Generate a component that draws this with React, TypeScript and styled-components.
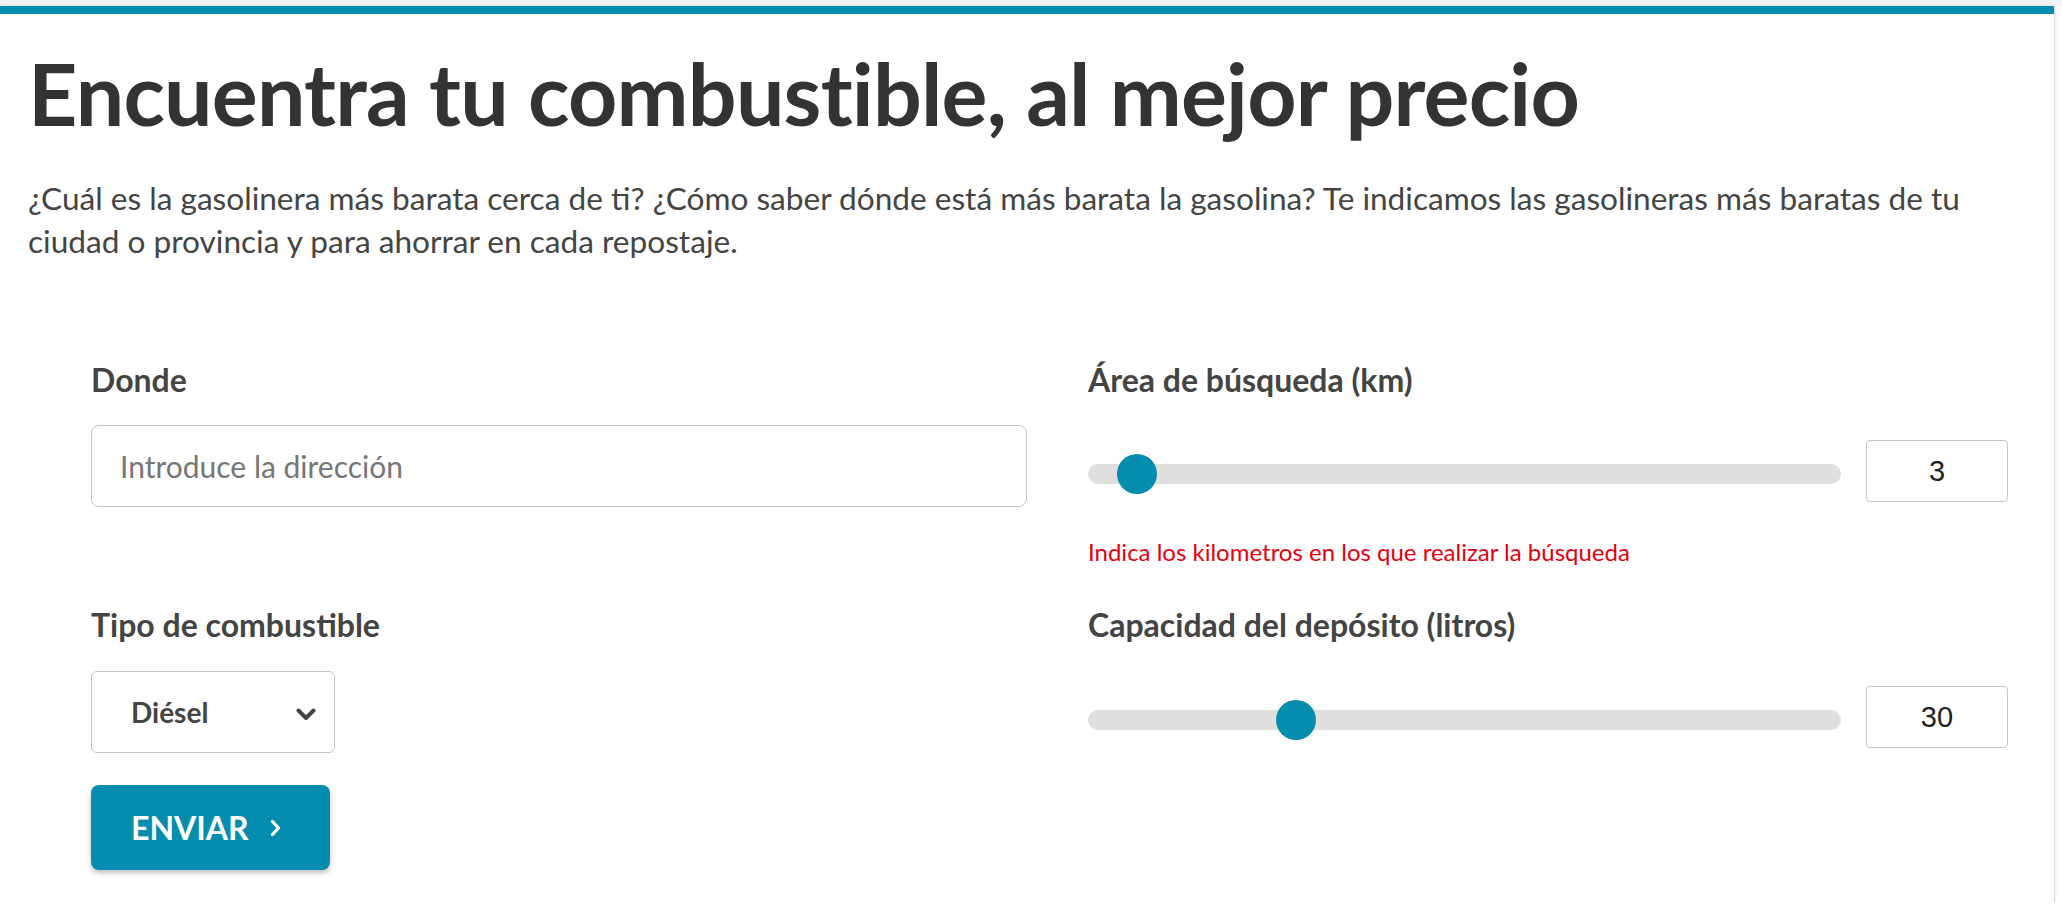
import React from "react";
import styled, { createGlobalStyle } from "styled-components";

const TEAL = "#058db0";

const GlobalStyle = createGlobalStyle`
  html, body { margin: 0; padding: 0; background: #ffffff; }
  body { font-family: Lato, "Noto Sans", sans-serif; }
  * { box-sizing: border-box; }
`;

const TopStrip = styled.div`
  height: 6px;
  background: #f3f3f3;
`;

const Card = styled.section`
  margin-right: 8px;
  background: #ffffff;
  border-top: 8px solid ${TEAL};
  box-shadow: 0 1px 3px rgba(0, 0, 0, 0.35);
  padding: 27px 28px 33px;
`;

const Title = styled.h1`
  margin: 0;
  font-family: Lato, sans-serif;
  font-weight: 700;
  font-size: 86px;
  line-height: 1.2;
  letter-spacing: -0.78px;
  color: #333333;
`;

const Intro = styled.p`
  margin: 33px 0 0;
  font-family: Lato, sans-serif;
  font-weight: 400;
  font-size: 31.6px;
  line-height: 43px;
  color: #444444;
`;

const Form = styled.form`
  margin-top: 98px;
  padding-left: 63px;
  display: grid;
  grid-template-columns: 936px 920px;
  column-gap: 61px;
  row-gap: 40px;
  align-items: start;
`;

const Field = styled.div`
  display: flex;
  flex-direction: column;
  align-items: stretch;
`;

const Label = styled.label`
  font-family: Lato, sans-serif;
  font-weight: 700;
  font-size: 32px;
  line-height: 38px;
  color: #444444;
`;

const TextInput = styled.input`
  margin-top: 26px;
  height: 82px;
  width: 100%;
  border: 1px solid #c5c5c5;
  border-radius: 8px;
  padding: 0 28px;
  font-family: Lato, sans-serif;
  font-size: 30px;
  color: #333;
  outline: none;
  &::placeholder { color: #767676; }
`;

const SliderRow = styled.div<{ $offset: number }>`
  margin-top: ${(p) => p.$offset}px;
  height: 62px;
  display: flex;
  align-items: center;
  gap: 25px;
`;

const Track = styled.div`
  position: relative;
  flex: 1;
  height: 20px;
  margin-top: 6px;
  border-radius: 10px;
  background: #e0dfdd;
`;

const Thumb = styled.span`
  position: absolute;
  top: 50%;
  width: 40px;
  height: 40px;
  margin-top: -20px;
  border-radius: 50%;
  background: ${TEAL};
`;

const NumberBox = styled.input`
  width: 142px;
  height: 62px;
  border: 1px solid #c6c6c6;
  border-radius: 4px;
  text-align: center;
  font-family: "Liberation Sans", Arial, sans-serif;
  font-size: 29px;
  color: #222222;
  outline: none;
  -moz-appearance: textfield;
  &::-webkit-outer-spin-button,
  &::-webkit-inner-spin-button { -webkit-appearance: none; margin: 0; }
`;

const Hint = styled.p`
  margin: 36px 0 0;
  font-family: Lato, sans-serif;
  font-size: 24px;
  line-height: 28px;
  color: #e3000f;
`;

const SelectWrap = styled.div`
  position: relative;
  margin-top: 27px;
  width: 244px;
  height: 82px;
`;

const Select = styled.select`
  appearance: none;
  -webkit-appearance: none;
  width: 100%;
  height: 100%;
  border: 1px solid #c4c4c4;
  border-radius: 6px;
  background: #ffffff;
  padding: 0 50px 0 39px;
  font-family: Lato, sans-serif;
  font-weight: 700;
  font-size: 28px;
  color: #444444;
  outline: none;
`;

const Chevron = styled.svg`
  position: absolute;
  right: 19px;
  top: 50%;
  margin-top: -4px;
  pointer-events: none;
`;

const SubmitButton = styled.button`
  align-self: flex-start;
  margin-top: 32px;
  width: 239px;
  height: 85px;
  border: none;
  border-radius: 8px;
  background: ${TEAL};
  box-shadow: 0 3px 5px rgba(0, 0, 0, 0.25);
  padding: 0 0 0 40px;
  display: flex;
  align-items: center;
  gap: 21px;
  font-family: Lato, sans-serif;
  font-weight: 700;
  font-size: 32px;
  color: #ffffff;
  cursor: pointer;
`;

type SliderProps = { value: number; min: number; max: number; offset: number };

function SliderField({ value, min, max, offset }: SliderProps) {
  const pct = (value - min) / (max - min);
  return (
    <SliderRow $offset={offset}>
      <Track>
        <Thumb style={{ left: `calc(${pct} * (100% - 40px))` }} />
      </Track>
      <NumberBox type="number" defaultValue={value} />
    </SliderRow>
  );
}

export default function App() {
  return (
    <>
      <GlobalStyle />
      <TopStrip />
      <Card>
        <Title>Encuentra tu combustible, al mejor precio</Title>
        <Intro>
          ¿Cuál es la gasolinera más barata cerca de ti? ¿Cómo saber dónde está más barata la
          gasolina? Te indicamos las gasolineras más baratas de tu ciudad o provincia y para
          ahorrar en cada repostaje.
        </Intro>
        <Form onSubmit={(e) => e.preventDefault()}>
          <Field>
            <Label>Donde</Label>
            <TextInput type="text" placeholder="Introduce la dirección" />
          </Field>
          <Field>
            <Label>Área de búsqueda (km)</Label>
            <SliderField value={3} min={1} max={50} offset={41} />
            <Hint>Indica los kilometros en los que realizar la búsqueda</Hint>
          </Field>
          <Field>
            <Label>Tipo de combustible</Label>
            <SelectWrap>
              <Select defaultValue="diesel">
                <option value="diesel">Diésel</option>
                <option value="gasolina95">Gasolina 95</option>
                <option value="gasolina98">Gasolina 98</option>
              </Select>
              <Chevron width="20" height="13" viewBox="0 0 20 13">
                <polyline
                  points="2.5,2.5 10,10 17.5,2.5"
                  fill="none"
                  stroke="#444444"
                  strokeWidth="4"
                  strokeLinecap="round"
                  strokeLinejoin="round"
                />
              </Chevron>
            </SelectWrap>
            <SubmitButton type="submit">
              ENVIAR
              <svg width="11" height="18" viewBox="0 0 11 18">
                <polyline
                  points="2.5,2.5 8.5,9 2.5,15.5"
                  fill="none"
                  stroke="#ffffff"
                  strokeWidth="3.2"
                  strokeLinecap="round"
                  strokeLinejoin="round"
                />
              </svg>
            </SubmitButton>
          </Field>
          <Field>
            <Label>Capacidad del depósito (litros)</Label>
            <SliderField value={30} min={5} max={100} offset={42} />
          </Field>
        </Form>
      </Card>
    </>
  );
}
